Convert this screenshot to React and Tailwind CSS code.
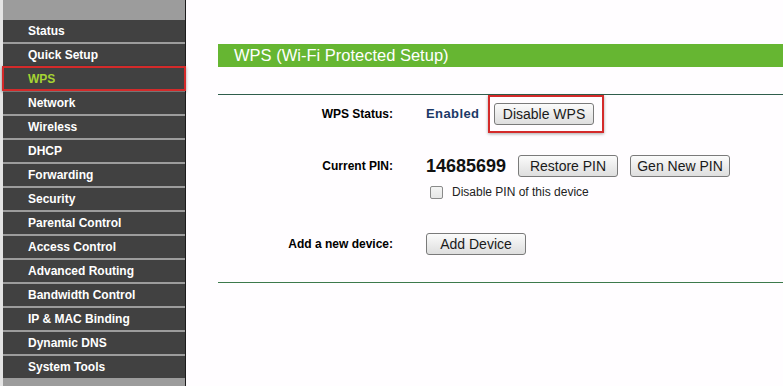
import React from "react";

const menu = [
  "Status",
  "Quick Setup",
  "WPS",
  "Network",
  "Wireless",
  "DHCP",
  "Forwarding",
  "Security",
  "Parental Control",
  "Access Control",
  "Advanced Routing",
  "Bandwidth Control",
  "IP & MAC Binding",
  "Dynamic DNS",
  "System Tools",
];

const Btn = ({ children }) => (
  <button className="w-[100px] h-[22px] rounded-[3px] border border-[#7a7a7a] bg-gradient-to-b from-[#fbfbfb] to-[#dedede] text-[14px] leading-none text-[#1a1a1a]">
    {children}
  </button>
);

const Label = ({ children }) => (
  <div className="w-[175px] shrink-0 text-right text-[12px] font-bold text-black">
    {children}
  </div>
);

const App = () => {
  return (
    <div className="flex w-[783px] h-[386px] overflow-hidden bg-white font-['Liberation_Sans',Arial,sans-serif]">
      {/* Sidebar */}
      <div className="flex shrink-0">
        <div className="w-[3px] bg-[#e4e4e4]" />
        <div className="w-[182px] bg-[#9c9c9c] pt-[20px] flex flex-col gap-[2px]">
          {menu.map((m) => (
            <div
              key={m}
              className={`relative h-[22px] bg-[#414141] pl-[25px] flex items-center text-[12px] font-bold ${
                m === "WPS" ? "text-[#a6d433]" : "text-white"
              }`}
            >
              {m}
              {m === "WPS" && (
                <div className="absolute left-[-1px] right-[-1px] top-[-2px] bottom-[-1px] border-2 border-[#d42a2a] shadow-[0_1px_3px_rgba(0,0,0,0.4)]" />
              )}
            </div>
          ))}
        </div>
        <div className="w-px bg-[#1c1c1c]" />
      </div>

      {/* Content */}
      <div className="flex-1 pl-[32px] bg-[#fffdff]">
        <div className="mt-[44px] h-[23px] bg-[#66b632] pl-[16px] flex items-center text-[16.5px] text-white">
          WPS (Wi-Fi Protected Setup)
        </div>
        <div className="mt-[27px] h-px bg-[#2f5e4c]" />

        <div className="mt-[8px] flex items-center h-[22px]">
          <Label>WPS Status:</Label>
          <div className="ml-[33px] w-[68px] text-[13px] font-bold tracking-[0.4px] text-[#1c3967]">
            Enabled
          </div>
          <div className="relative">
            <Btn>Disable WPS</Btn>
            <div className="absolute left-[-6px] right-[-10px] top-[-7px] bottom-[-7px] border-2 border-[#d42a2a] shadow-[0_1px_3px_rgba(0,0,0,0.35)]" />
          </div>
        </div>

        <div className="mt-[30px] flex items-center h-[22px]">
          <Label>Current PIN:</Label>
          <div className="ml-[33px] w-[92px] text-[18px] font-bold leading-none text-[#111]">
            14685699
          </div>
          <Btn>Restore PIN</Btn>
          <div className="w-[12px]" />
          <Btn>Gen New PIN</Btn>
        </div>

        <div className="mt-[8px] flex items-center h-[14px] pl-[212px]">
          <div className="w-[13px] h-[13px] border border-[#8a8a8a] rounded-[2px] bg-gradient-to-b from-[#f4f4f4] to-[#e6e6e6]" />
          <span className="ml-[9px] text-[12px] text-[#222]">
            Disable PIN of this device
          </span>
        </div>

        <div className="mt-[34px] flex items-center h-[22px]">
          <Label>Add a new device:</Label>
          <div className="ml-[33px]">
            <Btn>Add Device</Btn>
          </div>
        </div>

        <div className="mt-[27px] h-px bg-[#3d7a4c]" />
      </div>
    </div>
  );
};

export default App;
